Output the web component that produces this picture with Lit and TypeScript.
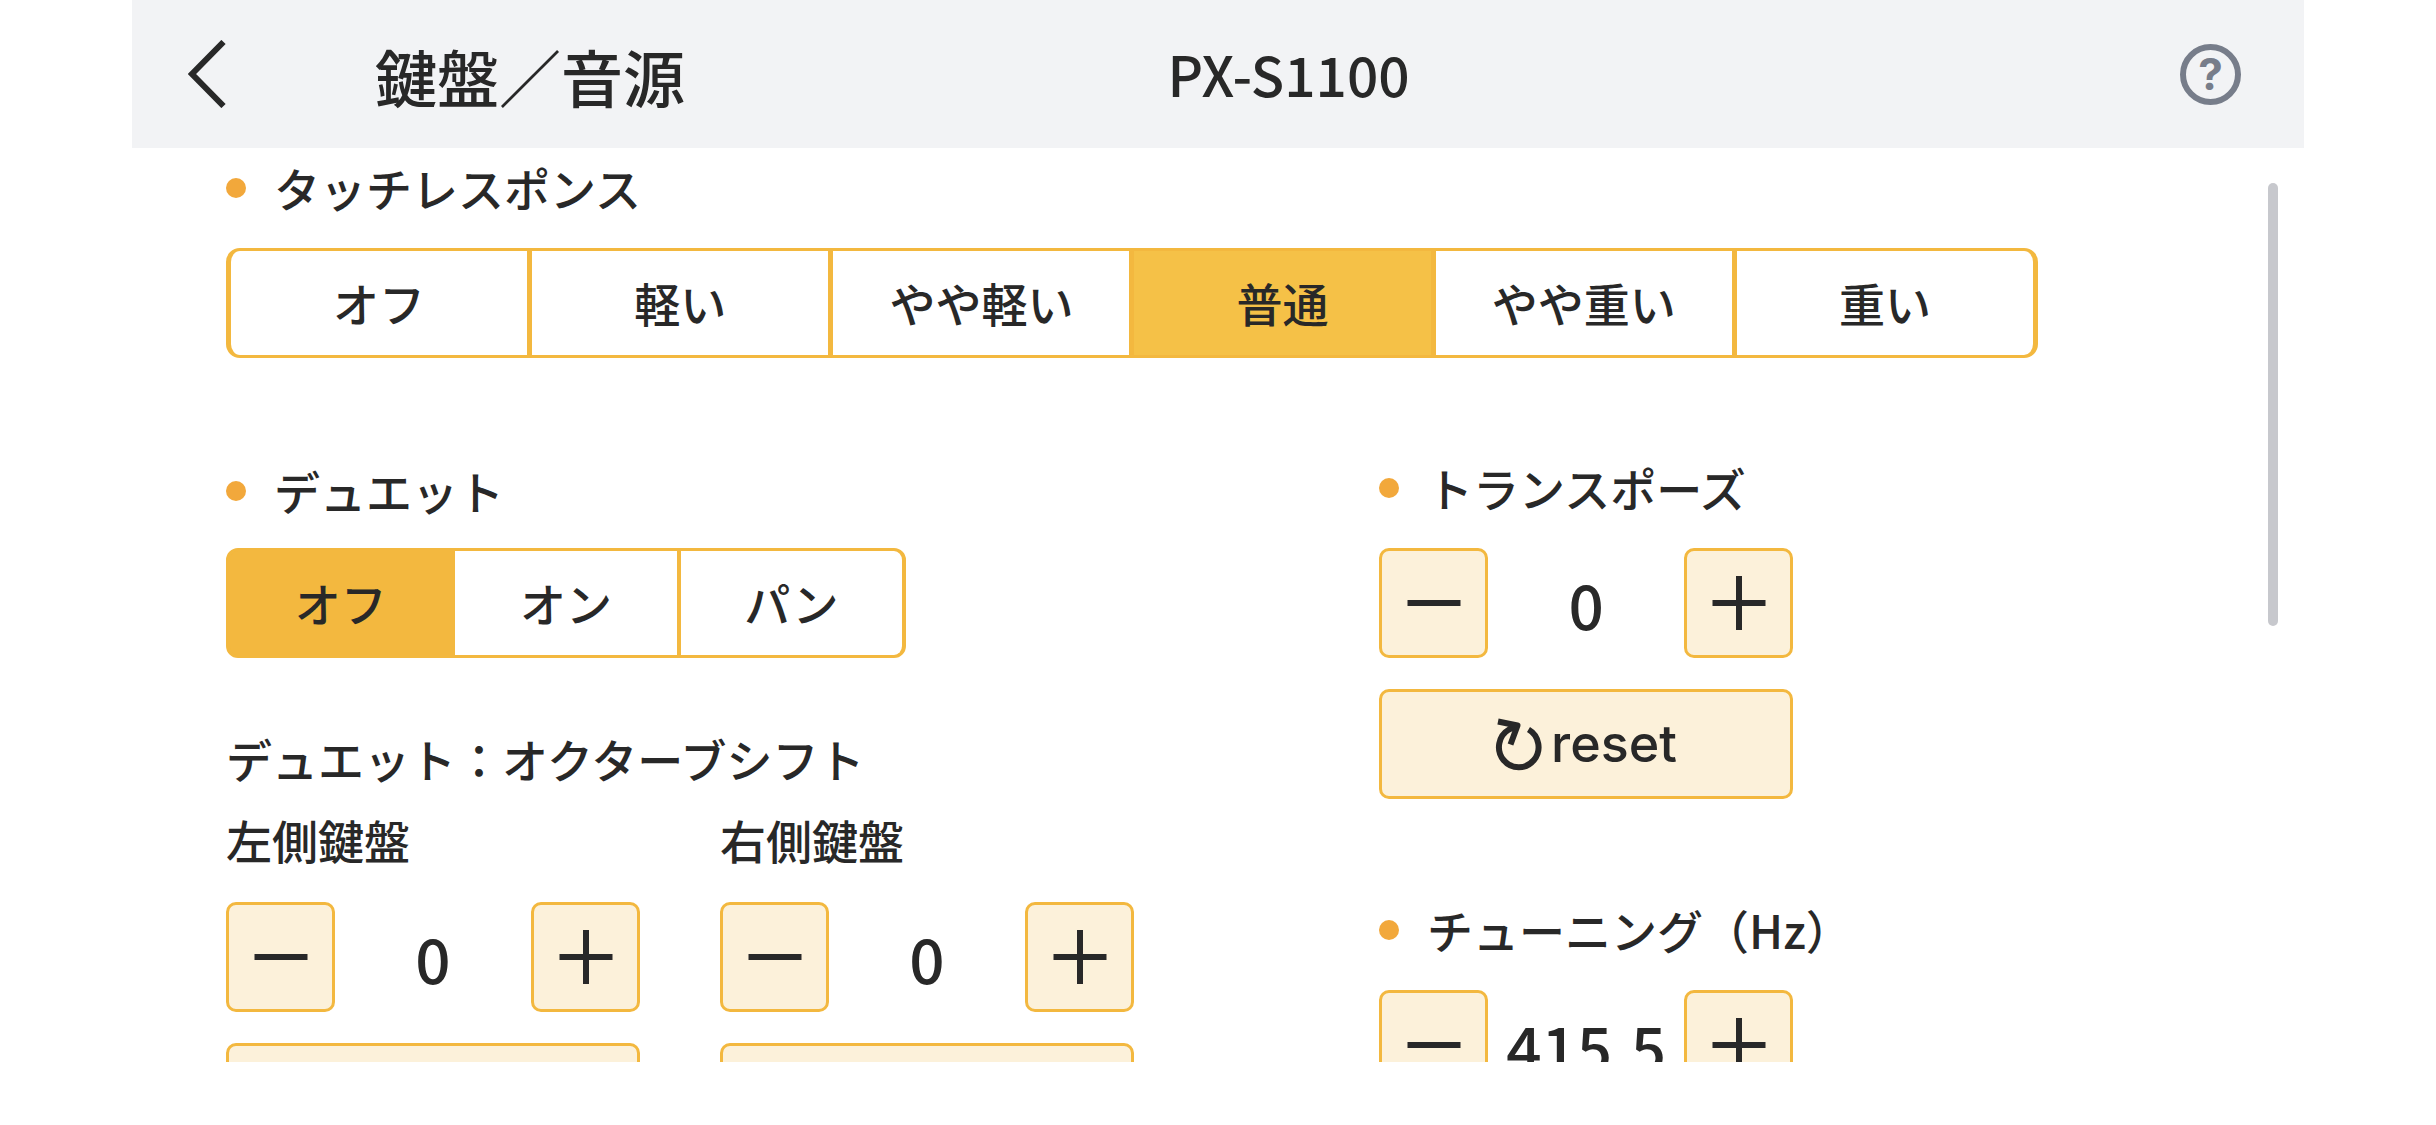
import { LitElement, html, svg, css } from "lit";
import { customElement, property, state } from "lit/decorators.js";
import { classMap } from "lit/directives/class-map.js";

const shared = css`
  :host {
    --ink: #282828;
    --line: #f3b83f;
    --cream: #fcf1da;
    --bullet: #f2a83b;
    display: block;
    box-sizing: border-box;
    color: var(--ink);
    font-family: "Noto Sans CJK JP", "Noto Sans", sans-serif;
    font-weight: 500;
  }
  *,
  *::before,
  *::after {
    box-sizing: border-box;
  }
  button {
    margin: 0;
    padding: 0;
    border: 0;
    background: none;
    color: inherit;
    font: inherit;
    cursor: pointer;
  }
`;

/** Row of mutually exclusive choices. */
@customElement("segmented-control")
export class SegmentedControl extends LitElement {
  @property({ type: Array }) options: string[] = [];
  @property() value = "";
  @property() name = "";
  @property() label = "";
  @property({ type: Boolean, reflect: true }) wide = false;

  static styles = [
    shared,
    css`
      .group {
        display: grid;
        grid-auto-flow: column;
        grid-auto-columns: 1fr;
        gap: 4px;
        height: 110px;
        border: solid var(--line);
        border-width: 3px 4px;
        border-radius: 12px;
        background: var(--line);
        overflow: hidden;
      }
      :host([wide]) .group {
        gap: 5px;
        border-width: 3px 5px;
        border-radius: 14px;
      }
      .cell {
        position: relative;
        display: flex;
        align-items: center;
        justify-content: center;
        padding-bottom: 2px;
        background: #fff;
        font-size: 46px;
        line-height: 60px;
        white-space: nowrap;
        cursor: pointer;
      }
      .cell.on {
        background: var(--line);
      }
      :host([wide]) .cell.on {
        background: #f5c147;
      }
      .cell input {
        position: absolute;
        inset: 0;
        margin: 0;
        appearance: none;
        cursor: pointer;
      }
    `,
  ];

  render() {
    return html`
      <div class="group" role="radiogroup" aria-label=${this.label}>
        ${this.options.map(
          (o) => html`
            <label class=${classMap({ cell: true, on: o === this.value })}>
              <input
                type="radio"
                name=${this.name}
                .value=${o}
                .checked=${o === this.value}
                @change=${() => (this.value = o)}
              />
              <span>${o}</span>
            </label>
          `
        )}
      </div>
    `;
  }
}

/** Minus / value / plus, with a reset button below. */
@customElement("value-stepper")
export class ValueStepper extends LitElement {
  @property({ type: Number }) value = 0;
  @property({ type: Number }) step = 1;
  @property({ type: Number }) initial = 0;
  @property({ type: Number }) digits = 0;
  @property() label = "";

  static styles = [
    shared,
    css`
      :host {
        width: 414px;
      }
      .row {
        display: flex;
        align-items: center;
        justify-content: space-between;
      }
      .key,
      .reset {
        display: flex;
        align-items: center;
        justify-content: center;
        height: 110px;
        border: 3px solid var(--line);
        border-radius: 10px;
        background: var(--cream);
      }
      .key {
        width: 109px;
      }
      .value {
        font-size: 62px;
        line-height: 80px;
      }
      .reset {
        gap: 9px;
        width: 100%;
        margin-top: 31px;
        font-family: Inter, "Liberation Sans", sans-serif;
        font-size: 52px;
        line-height: 60px;
      }
      svg {
        display: block;
        fill: none;
        stroke: var(--ink);
        stroke-width: 6;
      }
    `,
  ];

  private nudge(direction: number) {
    this.value = this.value + direction * this.step;
  }

  private icon(plus: boolean) {
    return html`
      <svg width="54" height="54" viewBox="0 0 54 54" aria-hidden="true">
        <path d="M0.5 27h53" />
        ${plus ? svg`<path d="M27 0v54" />` : ""}
      </svg>
    `;
  }

  render() {
    return html`
      <div class="row" role="group" aria-label=${this.label}>
        <button class="key" aria-label="−" @click=${() => this.nudge(-1)}>${this.icon(false)}</button>
        <output class="value">${this.value.toFixed(this.digits)}</output>
        <button class="key" aria-label="+" @click=${() => this.nudge(1)}>${this.icon(true)}</button>
      </div>
      <button class="reset" @click=${() => (this.value = this.initial)}>
        <svg width="47" height="53" viewBox="0 0 47 53" aria-hidden="true">
          <path d="M33.5 11.5A19.8 20.2 0 1 1 14 11.5L22 7.5" />
          <path d="M3 3.5L22.5 7.5L15.5 26.5" stroke-linejoin="round" />
        </svg>
        <span>reset</span>
      </button>
    `;
  }
}

@customElement("app-root")
export class AppRoot extends LitElement {
  @state() private device = "PX-S1100";

  static styles = [
    shared,
    css`
      :host {
        display: flex;
        flex-direction: column;
        height: 100vh;
        padding: 0 132px 63px;
        background: #fff;
      }
      .bar {
        display: grid;
        grid-template-columns: 243px 18fr 23fr 124px;
        align-items: center;
        flex: none;
        height: 148px;
        background: #f2f3f5;
      }
      .back {
        justify-self: start;
        margin-left: 56px;
      }
      .back svg {
        display: block;
        fill: none;
        stroke: var(--ink);
        stroke-width: 6;
      }
      h1,
      h2,
      h3,
      p {
        margin: 0;
        font-weight: 500;
      }
      .title {
        padding-top: 4px;
        font-size: 62px;
        line-height: 80px;
        white-space: nowrap;
      }
      .device {
        padding-bottom: 2px;
        font-size: 55px;
        line-height: 72px;
      }
      .help {
        display: flex;
        align-items: center;
        justify-content: center;
        width: 61px;
        height: 61px;
        border: 6px solid #777d8a;
        border-radius: 50%;
        color: #777d8a;
        font-family: Inter, "Liberation Sans", sans-serif;
        font-size: 44px;
        font-weight: 700;
        line-height: 48px;
      }
      .panel {
        position: relative;
        flex: 1;
        min-height: 0;
        overflow: hidden;
        padding: 10px 266px 0 94px;
      }
      .thumb {
        position: absolute;
        top: 35px;
        right: 26px;
        width: 10px;
        height: 443px;
        border-radius: 5px;
        background: #c7c8cd;
      }
      .setting {
        display: flex;
        flex-direction: column;
        gap: 30px;
      }
      .setting.duet {
        gap: 27px;
        padding-top: 3px;
      }
      .heading,
      .sub {
        font-size: 46px;
        line-height: 60px;
        white-space: nowrap;
      }
      .heading {
        display: flex;
        align-items: center;
        gap: 28px;
        height: 60px;
        padding-bottom: 2px;
      }
      .heading::before {
        content: "";
        width: 20px;
        height: 20px;
        margin-top: 2px;
        border-radius: 50%;
        background: var(--bullet);
      }
      .columns {
        display: grid;
        grid-template-columns: 7fr 4fr;
        margin-top: 100px;
      }
      .right {
        display: flex;
        flex-direction: column;
        gap: 101px;
      }
      .duet-choice {
        width: 680px;
      }
      .octave {
        margin-top: 70px;
      }
      .sides {
        display: flex;
        gap: 80px;
        margin-top: 21px;
      }
      .side {
        display: flex;
        flex-direction: column;
        gap: 33px;
      }
    `,
  ];

  render() {
    return html`
      <header class="bar">
        <button class="back" aria-label="戻る">
          <svg width="38" height="68" viewBox="0 0 38 68" aria-hidden="true">
            <path d="M35.5 2L4 34L35.5 66" />
          </svg>
        </button>
        <h1 class="title">鍵盤／音源</h1>
        <p class="device">${this.device}</p>
        <button class="help">?</button>
      </header>

      <main class="panel">
        <section class="setting">
          <h2 class="heading">タッチレスポンス</h2>
          <segmented-control
            wide
            name="touch"
            label="タッチレスポンス"
            .options=${["オフ", "軽い", "やや軽い", "普通", "やや重い", "重い"]}
            value="普通"
          ></segmented-control>
        </section>

        <div class="columns">
          <div class="left">
            <section class="setting duet">
              <h2 class="heading">デュエット</h2>
              <segmented-control
                class="duet-choice"
                name="duet"
                label="デュエット"
                .options=${["オフ", "オン", "パン"]}
                value="オフ"
              ></segmented-control>
            </section>
            <section class="octave">
              <h2 class="sub">デュエット：オクターブシフト</h2>
              <div class="sides">
                ${["左側鍵盤", "右側鍵盤"].map(
                  (side) => html`
                    <div class="side">
                      <h3 class="sub">${side}</h3>
                      <value-stepper label=${side}></value-stepper>
                    </div>
                  `
                )}
              </div>
            </section>
          </div>

          <div class="right">
            <section class="setting">
              <h2 class="heading">トランスポーズ</h2>
              <value-stepper label="トランスポーズ"></value-stepper>
            </section>
            <section class="setting">
              <h2 class="heading">チューニング（Hz）</h2>
              <value-stepper
                label="チューニング（Hz）"
                .value=${415.5}
                .initial=${440}
                .step=${0.1}
                .digits=${1}
              ></value-stepper>
            </section>
          </div>
        </div>

        <div class="thumb"></div>
      </main>
    `;
  }
}
